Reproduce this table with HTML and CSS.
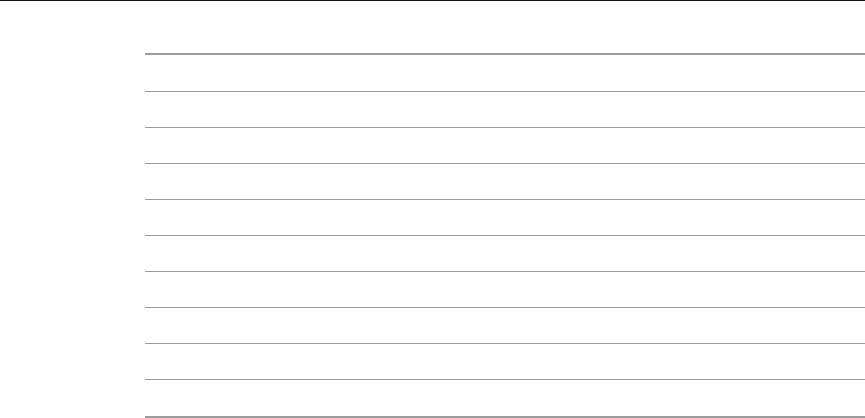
FILE: index.html
```html
<!DOCTYPE html>
<html lang="en">
<head>
<meta charset="utf-8">
<title>Table</title>
<link rel="stylesheet" href="styles.css">
</head>
<body>
<header class="topbar"></header>
<main class="content">
  <div class="grid">
    <div class="row row-head"></div>
    <div class="row"></div>
    <div class="row"></div>
    <div class="row"></div>
    <div class="row"></div>
    <div class="row"></div>
    <div class="row"></div>
    <div class="row"></div>
    <div class="row"></div>
    <div class="row row-last"></div>
  </div>
</main>
</body>
</html>
```
FILE: styles.css
```css
html, body {
  margin: 0;
  padding: 0;
  background: #ffffff;
  font-family: "Liberation Sans", Arial, sans-serif;
  overflow: hidden;
}
.topbar {
  height: 0;
  border-top: 1px solid #111111;
}
.content {
  padding: 52px 0 0 145px;
}
.grid {
  display: flex;
  flex-direction: column;
  border-top: 2px solid #9c9c9c;
}
.row {
  height: 35px;
  border-bottom: 1px solid #9c9c9c;
}
.row-head {
  height: 36px;
}
.row-last {
  height: 36px;
  border-bottom: 2px solid #9c9c9c;
}
```
